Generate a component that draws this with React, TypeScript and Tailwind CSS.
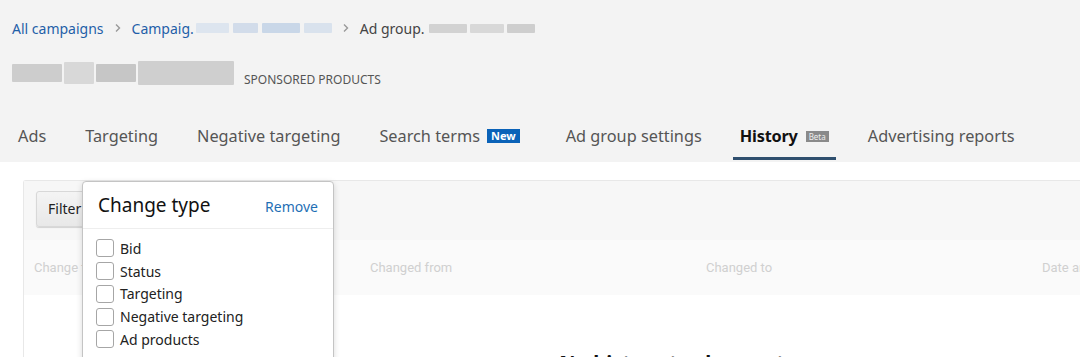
import React from "react";

const font = { fontFamily: '"Noto Sans", "Open Sans", Arial, sans-serif' };

function Blur({ w, h, cls }: { w: number; h: number; cls: string }) {
  return <span className={`inline-block rounded-[1px] ${cls}`} style={{ width: w, height: h }} />;
}

function Chevron() {
  return (
    <svg width="8" height="10" viewBox="0 0 8 10" className="mx-[10px]">
      <path d="M2 1.5 L5.5 5 L2 8.5" fill="none" stroke="#999" strokeWidth="1.4" />
    </svg>
  );
}

const checks = ["Bid", "Status", "Targeting", "Negative targeting", "Ad products"];

export default function App() {
  return (
    <div className="w-[1080px] h-[357px] overflow-hidden bg-white relative" style={font}>
      {/* header area */}
      <div className="bg-[#f3f3f3] h-[162px] flex flex-col">
        <div className="flex items-center h-[20px] mt-[18px] pl-[12px] text-[14px]">
          <span className="text-[#1f5fa8]">All campaigns</span>
          <Chevron />
          <span className="text-[#1f5fa8]">Campaig.</span>
          <span className="flex items-center gap-[4px] ml-[2px]">
            <Blur w={33} h={10} cls="bg-[#dde5ef]" />
            <Blur w={25} h={10} cls="bg-[#d2dcea]" />
            <Blur w={38} h={10} cls="bg-[#c9d7e8]" />
            <Blur w={28} h={10} cls="bg-[#d9e2ed]" />
          </span>
          <Chevron />
          <span className="text-[#444]">Ad group.</span>
          <span className="flex items-center gap-[3px] ml-[4px]">
            <Blur w={38} h={9} cls="bg-[#d2d2d2]" />
            <Blur w={34} h={9} cls="bg-[#d8d8d8]" />
            <Blur w={28} h={9} cls="bg-[#cecece]" />
          </span>
        </div>
        <div className="flex items-end mt-[22px] pl-[12px]">
          <span className="flex items-center gap-[2px] h-[26px]">
            <Blur w={50} h={18} cls="bg-[#cdcdcd]" />
            <Blur w={30} h={22} cls="bg-[#d8d8d8]" />
            <Blur w={40} h={18} cls="bg-[#c6c6c6]" />
            <Blur w={96} h={24} cls="bg-[#cfcfcf]" />
          </span>
          <span className="ml-[10px] text-[12px] text-[#555] leading-[16px] mb-[-2px]">SPONSORED PRODUCTS</span>
        </div>
        <div className="flex items-stretch mt-auto h-[52px] text-[16.3px] text-[#555] pl-[18px]">
          <div className="flex items-center mr-[39px]">Ads</div>
          <div className="flex items-center mr-[39px]">Targeting</div>
          <div className="flex items-center mr-[39px]">Negative targeting</div>
          <div className="flex items-center mr-[46px]">
            Search terms
            <span className="ml-[7px] bg-[#0a62b8] text-white text-[11px] font-bold leading-[12px] px-[4px] py-[1px]">New</span>
          </div>
          <div className="flex items-center mr-[31px]">Ad group settings</div>
          <div className="flex items-center relative px-[7px] mr-[32px] text-[#111] font-bold">
            <span className="tracking-[-0.2px]">History</span>
            <span className="ml-[8px] bg-[#8a8a8a] text-[#eee] text-[8px] leading-[11px] px-[3px] font-normal">Beta</span>
            <span className="absolute left-0 right-0 bottom-[2px] h-[3px] bg-[#2f4f6e]" />
          </div>
          <div className="flex items-center">Advertising reports</div>
        </div>
      </div>

      {/* content */}
      <div className="pt-[18px] pl-[23px]">
        <div className="border border-[#e8e8e8] border-r-0 rounded-tl-[3px] bg-white">
          <div className="h-[59px] bg-[#f7f7f7] flex items-center pl-[12px] pb-[4px]">
            <div className="h-[36px] px-[11px] flex items-center border border-[#d8d8d8] rounded-[3px] bg-gradient-to-b from-[#f4f4f4] to-[#e8e8e8] shadow-[0_1px_1px_rgba(0,0,0,0.15)] text-[14px] text-[#222]">
              Filter by
            </div>
          </div>
          <div className="h-[55px] bg-[#fafafa] flex items-center text-[13px] text-[#d0d0d0] whitespace-nowrap" style={{ fontFamily: '"Roboto", "Liberation Sans", sans-serif' }}>
            <span className="ml-[10px] w-[336px] shrink-0">Change type</span>
            <span className="w-[336px] shrink-0">Changed from</span>
            <span className="w-[336px] shrink-0">Changed to</span>
            <span className="shrink-0">Date and time</span>
          </div>
          <div className="h-[100px] flex justify-center pl-[240px] pt-[54px]">
            <span className="text-[20px] font-bold text-[#111] leading-[28px]">No history to show yet</span>
          </div>
        </div>
      </div>

      {/* popover */}
      <div className="absolute left-[82px] top-[181px] w-[252px] h-[200px] bg-white border border-[#c4c4c4] rounded-[4px] shadow-[0_2px_6px_rgba(0,0,0,0.15)]">
        <div className="h-[47px] flex items-center justify-between px-[15px] border-b border-[#eeeeee]">
          <span className="text-[19px] text-[#111]">Change type</span>
          <span className="text-[14px] text-[#1f6fb5] mt-[3px]">Remove</span>
        </div>
        <div className="pt-[8px] pl-[13px] flex flex-col">
          {checks.map((c) => (
            <div key={c} className="flex items-center h-[22.75px]">
              <span className="w-[18px] h-[18px] border border-[#a6a6a6] rounded-[3px] bg-white" />
              <span className="ml-[6px] text-[14px] text-[#222]">{c}</span>
            </div>
          ))}
        </div>
      </div>
    </div>
  );
}
